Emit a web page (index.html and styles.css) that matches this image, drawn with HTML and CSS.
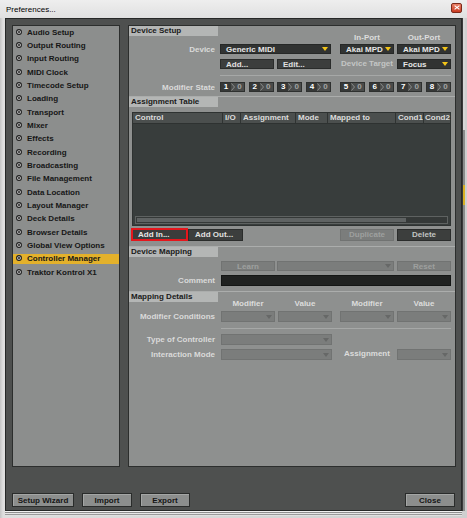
FILE: index.html
```html
<!DOCTYPE html>
<html>
<head>
<meta charset="utf-8">
<title>Preferences</title>
<link rel="stylesheet" href="styles.css">
</head>
<body>
<div class="window">
  <div class="titlebar">
    <span class="title">Preferences...</span>
    <span class="close"><svg width="6" height="5" viewBox="0 0 6 5"><path d="M0.6 0.6L5.4 4.4M5.4 0.6L0.6 4.4" stroke="#fff" stroke-width="1.2"/></svg></span>
  </div>
  <div class="main">
    <div class="frame">
      <div class="panels">
        <nav class="nav">
          <div class="nav-item"><svg class="radio" viewBox="0 0 6 6"><circle cx="3" cy="3" r="2.4"/><circle class="dot" cx="3" cy="3" r="1"/></svg><span>Audio Setup</span></div>
          <div class="nav-item"><svg class="radio" viewBox="0 0 6 6"><circle cx="3" cy="3" r="2.4"/><circle class="dot" cx="3" cy="3" r="1"/></svg><span>Output Routing</span></div>
          <div class="nav-item"><svg class="radio" viewBox="0 0 6 6"><circle cx="3" cy="3" r="2.4"/><circle class="dot" cx="3" cy="3" r="1"/></svg><span>Input Routing</span></div>
          <div class="nav-item"><svg class="radio" viewBox="0 0 6 6"><circle cx="3" cy="3" r="2.4"/><circle class="dot" cx="3" cy="3" r="1"/></svg><span>MIDI Clock</span></div>
          <div class="nav-item"><svg class="radio" viewBox="0 0 6 6"><circle cx="3" cy="3" r="2.4"/><circle class="dot" cx="3" cy="3" r="1"/></svg><span>Timecode Setup</span></div>
          <div class="nav-item"><svg class="radio" viewBox="0 0 6 6"><circle cx="3" cy="3" r="2.4"/><circle class="dot" cx="3" cy="3" r="1"/></svg><span>Loading</span></div>
          <div class="nav-item"><svg class="radio" viewBox="0 0 6 6"><circle cx="3" cy="3" r="2.4"/><circle class="dot" cx="3" cy="3" r="1"/></svg><span>Transport</span></div>
          <div class="nav-item"><svg class="radio" viewBox="0 0 6 6"><circle cx="3" cy="3" r="2.4"/><circle class="dot" cx="3" cy="3" r="1"/></svg><span>Mixer</span></div>
          <div class="nav-item"><svg class="radio" viewBox="0 0 6 6"><circle cx="3" cy="3" r="2.4"/><circle class="dot" cx="3" cy="3" r="1"/></svg><span>Effects</span></div>
          <div class="nav-item"><svg class="radio" viewBox="0 0 6 6"><circle cx="3" cy="3" r="2.4"/><circle class="dot" cx="3" cy="3" r="1"/></svg><span>Recording</span></div>
          <div class="nav-item"><svg class="radio" viewBox="0 0 6 6"><circle cx="3" cy="3" r="2.4"/><circle class="dot" cx="3" cy="3" r="1"/></svg><span>Broadcasting</span></div>
          <div class="nav-item"><svg class="radio" viewBox="0 0 6 6"><circle cx="3" cy="3" r="2.4"/><circle class="dot" cx="3" cy="3" r="1"/></svg><span>File Management</span></div>
          <div class="nav-item"><svg class="radio" viewBox="0 0 6 6"><circle cx="3" cy="3" r="2.4"/><circle class="dot" cx="3" cy="3" r="1"/></svg><span>Data Location</span></div>
          <div class="nav-item"><svg class="radio" viewBox="0 0 6 6"><circle cx="3" cy="3" r="2.4"/><circle class="dot" cx="3" cy="3" r="1"/></svg><span>Layout Manager</span></div>
          <div class="nav-item"><svg class="radio" viewBox="0 0 6 6"><circle cx="3" cy="3" r="2.4"/><circle class="dot" cx="3" cy="3" r="1"/></svg><span>Deck Details</span></div>
          <div class="nav-item"><svg class="radio" viewBox="0 0 6 6"><circle cx="3" cy="3" r="2.4"/><circle class="dot" cx="3" cy="3" r="1"/></svg><span>Browser Details</span></div>
          <div class="nav-item"><svg class="radio" viewBox="0 0 6 6"><circle cx="3" cy="3" r="2.4"/><circle class="dot" cx="3" cy="3" r="1"/></svg><span>Global View Options</span></div>
          <div class="nav-item active"><svg class="radio" viewBox="0 0 6 6"><circle cx="3" cy="3" r="2.4"/><circle class="dot" cx="3" cy="3" r="1"/></svg><span>Controller Manager</span></div>
          <div class="nav-item"><svg class="radio" viewBox="0 0 6 6"><circle cx="3" cy="3" r="2.4"/><circle class="dot" cx="3" cy="3" r="1"/></svg><span>Traktor Kontrol X1</span></div>
        </nav>

        <div class="content">
          <section class="sec">
            <div class="sec-head">Device Setup</div>
            <div class="row row-caps">
              <div class="lbl"></div>
              <div class="grp"></div>
              <div class="grp grp2"><span class="cell cap">In-Port</span><span class="cell cap">Out-Port</span></div>
            </div>
            <div class="row">
              <div class="lbl">Device</div>
              <div class="dd dd-wide"><span>Generic MIDI</span><svg class="tri" viewBox="0 0 6 4"><path d="M0 0H6L3 4Z"/></svg></div>
              <div class="grp grp2">
                <div class="dd cell"><span>Akai MPD</span><svg class="tri" viewBox="0 0 6 4"><path d="M0 0H6L3 4Z"/></svg></div>
                <div class="dd cell"><span>Akai MPD</span><svg class="tri" viewBox="0 0 6 4"><path d="M0 0H6L3 4Z"/></svg></div>
              </div>
            </div>
            <div class="row row-gap5">
              <div class="lbl"></div>
              <div class="grp">
                <div class="btn btn-dark cell">Add...</div>
                <div class="btn btn-dark cell">Edit...</div>
              </div>
              <div class="grp grp2">
                <span class="cell cap cap-dim">Device Target</span>
                <div class="dd cell"><span>Focus</span><svg class="tri" viewBox="0 0 6 4"><path d="M0 0H6L3 4Z"/></svg></div>
              </div>
            </div>
            <div class="sep sep-setup"></div>
            <div class="row row-mod">
              <div class="lbl">Modifier State</div>
              <div class="grp grp-mod">
                <div class="mod"><span class="mod-n">1</span><svg class="chev" viewBox="0 0 4 8"><path d="M0.5 0.5L3.5 4L0.5 7.5"/></svg><span class="mod-v">0</span></div>
                <div class="mod"><span class="mod-n">2</span><svg class="chev" viewBox="0 0 4 8"><path d="M0.5 0.5L3.5 4L0.5 7.5"/></svg><span class="mod-v">0</span></div>
                <div class="mod"><span class="mod-n">3</span><svg class="chev" viewBox="0 0 4 8"><path d="M0.5 0.5L3.5 4L0.5 7.5"/></svg><span class="mod-v">0</span></div>
                <div class="mod"><span class="mod-n">4</span><svg class="chev" viewBox="0 0 4 8"><path d="M0.5 0.5L3.5 4L0.5 7.5"/></svg><span class="mod-v">0</span></div>
              </div>
              <div class="grp grp2 grp-mod">
                <div class="mod"><span class="mod-n">5</span><svg class="chev" viewBox="0 0 4 8"><path d="M0.5 0.5L3.5 4L0.5 7.5"/></svg><span class="mod-v">0</span></div>
                <div class="mod"><span class="mod-n">6</span><svg class="chev" viewBox="0 0 4 8"><path d="M0.5 0.5L3.5 4L0.5 7.5"/></svg><span class="mod-v">0</span></div>
                <div class="mod"><span class="mod-n">7</span><svg class="chev" viewBox="0 0 4 8"><path d="M0.5 0.5L3.5 4L0.5 7.5"/></svg><span class="mod-v">0</span></div>
                <div class="mod"><span class="mod-n">8</span><svg class="chev" viewBox="0 0 4 8"><path d="M0.5 0.5L3.5 4L0.5 7.5"/></svg><span class="mod-v">0</span></div>
              </div>
            </div>
          </section>

          <section class="sec sec-line sec-assign">
            <div class="sec-head">Assignment Table</div>
            <div class="table">
              <div class="thead">
                <div class="th c-control">Control</div>
                <div class="th c-io">I/O</div>
                <div class="th c-assign">Assignment</div>
                <div class="th c-mode">Mode</div>
                <div class="th c-mapped">Mapped to</div>
                <div class="th c-cond1">Cond1</div>
                <div class="th c-cond2">Cond2</div>
              </div>
              <div class="tbody">
                <div class="hscroll"><div class="thumb"></div></div>
              </div>
            </div>
            <div class="tbtns">
              <div class="btn btn-red">Add In...</div>
              <div class="btn btn-dark btn-addout">Add Out...</div>
              <div class="btn dis btn-dup">Duplicate</div>
              <div class="btn btn-dark btn-del">Delete</div>
            </div>
          </section>

          <section class="sec sec-line sec-map">
            <div class="sec-head">Device Mapping</div>
            <div class="row row-learn">
              <div class="lbl lbl6"></div>
              <div class="btn dis cell">Learn</div>
              <div class="dd dis dd-learn"><span></span><svg class="tri" viewBox="0 0 6 4"><path d="M0 0H6L3 4Z"/></svg></div>
              <div class="btn dis cell btn-reset">Reset</div>
            </div>
            <div class="row row-comment">
              <div class="lbl lbl6">Comment</div>
              <div class="comment"></div>
            </div>
          </section>

          <section class="sec sec-line sec-details">
            <div class="sec-head">Mapping Details</div>
            <div class="row row-caps row-caps2">
              <div class="lbl lbl6"></div>
              <div class="grp grp-m"><span class="cell cap">Modifier</span><span class="cell cap">Value</span></div>
              <div class="grp grp-m grp-m2"><span class="cell cap">Modifier</span><span class="cell cap">Value</span></div>
            </div>
            <div class="row row11 row-cond">
              <div class="lbl lbl6">Modifier Conditions</div>
              <div class="grp grp-m">
                <div class="dd dis cell"><span></span><svg class="tri" viewBox="0 0 6 4"><path d="M0 0H6L3 4Z"/></svg></div>
                <div class="dd dis cell"><span></span><svg class="tri" viewBox="0 0 6 4"><path d="M0 0H6L3 4Z"/></svg></div>
              </div>
              <div class="grp grp-m grp-m2">
                <div class="dd dis cell"><span></span><svg class="tri" viewBox="0 0 6 4"><path d="M0 0H6L3 4Z"/></svg></div>
                <div class="dd dis cell"><span></span><svg class="tri" viewBox="0 0 6 4"><path d="M0 0H6L3 4Z"/></svg></div>
              </div>
            </div>
            <div class="sep sep-details"></div>
            <div class="row row11 row-type">
              <div class="lbl lbl6">Type of Controller</div>
              <div class="dd dis dd-wide"><span></span><svg class="tri" viewBox="0 0 6 4"><path d="M0 0H6L3 4Z"/></svg></div>
            </div>
            <div class="row row11 row-inter">
              <div class="lbl lbl6">Interaction Mode</div>
              <div class="dd dis dd-wide"><span></span><svg class="tri" viewBox="0 0 6 4"><path d="M0 0H6L3 4Z"/></svg></div>
              <div class="grp grp-m grp-m2">
                <span class="cell cap">Assignment</span>
                <div class="dd dis cell"><span></span><svg class="tri" viewBox="0 0 6 4"><path d="M0 0H6L3 4Z"/></svg></div>
              </div>
            </div>
          </section>
        </div>
      </div>
      <div class="footer">
        <div class="fbtn fb-wizard">Setup Wizard</div>
        <div class="fbtn fb-std">Import</div>
        <div class="fbtn fb-std">Export</div>
        <div class="fbtn fb-std fb-close">Close</div>
      </div>
    </div>
    <div class="edge"></div>
  </div>
</div>
</body>
</html>
```

FILE: styles.css
```css
* { box-sizing: border-box; margin: 0; padding: 0; }
html, body { width: 467px; height: 518px; overflow: hidden; }
body {
  background: #d4d4d4;
  font-family: "Liberation Sans", Arial, sans-serif;
  font-size: 8px;
  font-weight: bold;
}
.window {
  width: 467px;
  height: 518px;
  display: flex;
  flex-direction: column;
  background: linear-gradient(90deg, #c4c4c4 0, #dedede 3px, #cfcfcf 100%);
}
.titlebar {
  height: 18px;
  flex: none;
  display: flex;
  align-items: center;
  justify-content: space-between;
  padding: 0 5px 0 6px;
  background: linear-gradient(#eeeeee, #e0e0e0);
}
.title { font-weight: normal; font-size: 8px; color: #000; }
.close {
  width: 11px;
  height: 10px;
  margin-top: -3px;
  background: linear-gradient(#ea8066, #c93a20);
  border: 1px solid #7d2a1b;
  border-radius: 2px;
  display: flex;
  align-items: center;
  justify-content: center;
}
.close svg { width: 6px; height: 5px; display: block; }

.main { display: flex; height: 493px; flex: none; padding-right: 2px; }
.frame {
  margin-left: 5px;
  width: 457px;
  height: 493px;
  background: #4e504f;
  border: 1px solid #262827;
  box-shadow: 0 1px 0 #f0f0f0, 0 2px 0 #8e8e8e, 0 3px 0 #e6e6e6, 0 4px 0 #9a9a9a, 0 5px 0 #e0e0e0;
  padding: 6px 5px 0 6px;
  display: flex;
  flex-direction: column;
}
.edge {
  width: 3px;
  background: linear-gradient(#d6d6d6 0, #d6d6d6 112px, #8a8c8b 112px, #8a8c8b 167px, #d8b024 167px, #d8b024 187px, #8a8c8b 187px);
  border-left: 1px solid #3a3a3a;
}

.panels { display: flex; gap: 8px; height: 442px; flex: none; }

/* nav */
.nav {
  width: 108px;
  background: #8c8e8d;
  border: 1px solid #2c2e2d;
  padding-top: 1.3px;
}
.nav-item {
  height: 10px;
  margin-bottom: 3.33px;
  display: flex;
  align-items: center;
  color: #161616;
  white-space: nowrap;
}
.nav-item.active { background: #e3b12b; }
.radio { width: 6px; height: 6px; margin: -1px 5px 0 3px; flex: none; }
.radio circle { fill: #dcdcdc; stroke: #1c1c1c; stroke-width: 1.1; }
.radio circle.dot { fill: #1c1c1c; stroke: none; }

/* content */
.content {
  width: 328px;
  background: #8e908f;
  border: 1px solid #2c2e2d;
}
.sec-line { border-top: 1px solid #abadac; }
.sec-head {
  width: 89px;
  height: 10px;
  line-height: 10px;
  background: #b4b6b5;
  color: #1a1a1a;
  padding-left: 2px;
  white-space: nowrap;
}
.row { display: flex; align-items: center; height: 10px; }
.row11 { height: 11px; }
.row11 .dd { height: 11px; }
.lbl {
  width: 86px;
  margin-right: 5px;
  text-align: right;
  color: #dadada;
  white-space: nowrap;
  flex: none;
}
.lbl6 { margin-right: 6px; }
.grp { display: flex; gap: 3px; width: 111px; flex: none; }
.grp2 { margin-left: 9px; }
.cell { width: 54px; flex: none; }
.cap { text-align: center; color: #dcdcdc; white-space: nowrap; }
.cap-dim { color: #c4c6c5; }
.row-caps { height: 8px; align-items: flex-start; line-height: 4px; }
.row-gap5 { margin-top: 5px; }

.dd {
  height: 10px;
  background: #313332;
  border: 1px solid #262827;
  color: #e6e6e6;
  display: flex;
  align-items: center;
  justify-content: space-between;
  padding: 0 2px 0 5px;
  white-space: nowrap;
}
.dd-wide { width: 111px; flex: none; }
.tri { width: 6px; height: 4px; fill: #f2c418; flex: none; }
.dis .tri { fill: #666867; }

.btn {
  height: 10px;
  display: flex;
  align-items: center;
  white-space: nowrap;
}
.btn-dark {
  background: #3c3e3d;
  border: 1px solid #2a2c2b;
  color: #e0e0e0;
  padding-left: 5px;
}
.dis {
  background: #7b7d7c;
  border: 1px solid #717372;
  color: #9ea09f;
  justify-content: center;
}
.dd.dis { justify-content: space-between; }

.sep { height: 1px; background: #a6a8a7; }
.sep-setup { margin: 6px 0 0 91px; width: 231px; }
.row-mod { margin-top: 6px; }
.grp-mod { justify-content: space-between; gap: 0; }
.mod {
  width: 25px;
  height: 10px;
  display: flex;
  align-items: center;
  background: #4a4c4b;
  border: 1px solid #2e302f;
}
.mod-n {
  width: 10px;
  height: 100%;
  background: #363837;
  color: #ffffff;
  text-align: center;
  line-height: 8px;
}
.chev { width: 4px; height: 8px; flex: none; }
.chev path { fill: none; stroke: #8a8c8b; stroke-width: 1; }
.mod-v { flex: 1; text-align: center; color: #a2a4a3; line-height: 8px; }

/* assignment table */
.sec-assign { margin-top: 4px; }
.table {
  margin: 5px 4px 0 3px;
  height: 114px;
  border: 1px solid #2e3231;
  background: #383d3c;
  display: flex;
  flex-direction: column;
}
.thead {
  display: flex;
  height: 11px;
  background: #4b4f4e;
  border-bottom: 1px solid #2e3231;
}
.th {
  border-right: 1px solid #2f3332;
  color: #dcdcdc;
  padding-left: 2px;
  line-height: 10px;
  white-space: nowrap;
  overflow: hidden;
  flex: none;
}
.c-control { width: 90px; }
.c-io { width: 18px; }
.c-assign { width: 55px; }
.c-mode { width: 32px; }
.c-mapped { width: 68px; }
.c-cond1 { width: 28px; }
.c-cond2 { flex: 1; min-width: 0; border-right: none; padding-left: 1px; overflow: visible; }
.tbody {
  flex: 1;
  display: flex;
  flex-direction: column;
  justify-content: flex-end;
  padding: 0 2px 1px 2px;
}
.hscroll {
  height: 8px;
  border: 1px solid #5e6261;
  background: #353938;
  padding: 1px;
}
.thumb { width: 87%; height: 100%; background: #5f6363; }

.tbtns {
  display: flex;
  align-items: center;
  margin: 2px 4px 0 2px;
  height: 13px;
}
.btn-red {
  width: 57px;
  height: 13px;
  background: #3a3c3b;
  border: 2px solid #e5161c;
  color: #e6e6e6;
  padding-left: 5px;
}
.btn-addout { width: 55px; height: 12px; padding-left: 6px; }
.btn-dup { width: 54px; height: 12px; margin-left: auto; }
.btn-del {
  width: 54px;
  height: 12px;
  margin-left: 3px;
  justify-content: center;
  padding-left: 0;
  color: #c2c4c3;
}

/* device mapping */
.sec-map { margin-top: 5px; }
.row-learn { margin-top: 4px; }
.dd-learn { width: 117px; margin-left: 2px; flex: none; }
.btn-reset { margin-left: 3px; }
.row-comment { margin-top: 4px; height: 11px; }
.comment {
  width: 230px;
  height: 11px;
  background: #202221;
  border: 1px solid #141615;
}

/* mapping details */
.sec-details { margin-top: 5px; }
.grp-m { width: 111px; }
.grp-m2 { margin-left: 8px; }
.row-cond { margin-top: 1px; }
.sep-details { margin: 6px 0 0 92px; width: 230px; }
.row-type { margin-top: 5px; }
.row-inter { margin-top: 4px; }

/* footer */
.footer {
  display: flex;
  gap: 8px;
  margin-top: 26px;
  height: 14px;
  padding-right: 1px;
  flex: none;
}
.fbtn {
  height: 14px;
  background: #8c8e8d;
  border: 1px solid #2a2c2b;
  box-shadow: inset 1px 1px 0 #a4a6a5;
  color: #151515;
  display: flex;
  align-items: center;
  justify-content: center;
  white-space: nowrap;
}
.fb-wizard { width: 62px; }
.fb-std { width: 50px; }
.fb-close { margin-left: auto; }
```
